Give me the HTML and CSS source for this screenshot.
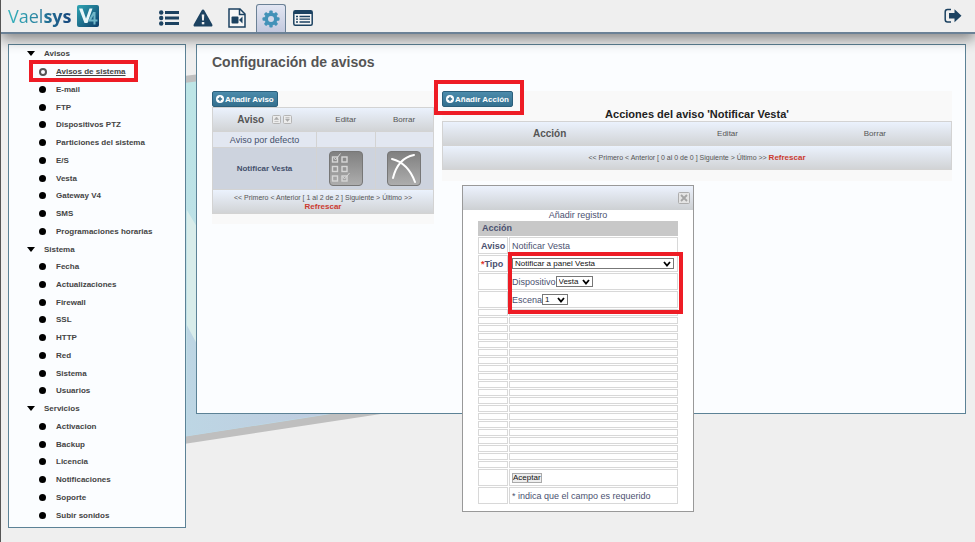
FILE: index.html
```html
<!DOCTYPE html>
<html lang="es">
<head>
<meta charset="utf-8">
<title>Vaelsys V4 - Configuración de avisos</title>
<link rel="stylesheet" href="styles.css">
</head>
<body>
<svg class="backdrop" viewBox="0 0 975 542" preserveAspectRatio="none" aria-hidden="true">
  <defs>
    <linearGradient id="sky" x1="0" y1="0" x2="0" y2="1">
      <stop offset="0" stop-color="#bde6e6"/><stop offset="1" stop-color="#bcdbe8"/>
    </linearGradient>
    <linearGradient id="sea" x1="0" y1="0" x2="1" y2="0">
      <stop offset="0" stop-color="#bdd6e4"/><stop offset="1" stop-color="#bfcbdf"/>
    </linearGradient>
  </defs>
  <path d="M150 80 400 50V411L150 449Z" fill="#bfbfbf"/>
  <path d="M150 87 400 57V403L150 442Z" fill="url(#sky)"/>
  <path d="M186 210 300 400H186Z" fill="#d8ecea"/>
  <path d="M186 325 230 408 340 412 186 436Z" fill="url(#sea)"/>
</svg>

<header class="topbar">
  <a class="brand" href="#" aria-label="Vaelsys V4">
    <span class="brand-name">Vael<b>sys</b></span>
    <svg class="brand-mark" viewBox="0 0 22 22" aria-hidden="true">
      <defs><linearGradient id="mark" x1="0" y1="0" x2="1" y2="1"><stop offset="0" stop-color="#2fa6b4"/><stop offset="1" stop-color="#0d3c68"/></linearGradient></defs>
      <rect width="22" height="22" rx="2" fill="url(#mark)"/>
      <path d="M2 3.500H5.500L9 13.500 12.500 3.500H15.500L10.500 18H7.500Z" fill="#e9f7f9"/>
      <path d="M17.500 7V19.500M17 7.500 12.500 15.500H20.500" fill="none" stroke="#6fb6c8" stroke-width="2"/>
    </svg>
  </a>
  <nav class="tabs" aria-label="Secciones">
    <a class="tab" href="#" aria-label="Lista"><svg width="20" height="16" viewBox="0 0 20 16"><g fill="#1c4261"><circle cx="2.200" cy="2.500" r="2.200"/><circle cx="2.200" cy="8" r="2.200"/><circle cx="2.200" cy="13.500" r="2.200"/><rect x="6" y="1" width="14" height="3"/><rect x="6" y="6.500" width="14" height="3"/><rect x="6" y="12" width="14" height="3"/></g></svg></a>
    <a class="tab" href="#" aria-label="Alarmas"><svg width="20" height="18" viewBox="0 0 20 18"><path d="M10 0.500Q10.900 0.500 11.400 1.400L19.300 15.400Q20 17.500 18 17.500H2Q0 17.500 0.700 15.400L8.600 1.400Q9.100 0.500 10 0.500Z" fill="#1c4261"/><path d="M8.700 5.500H11.300L10.900 11.500H9.100Z" fill="#efefef"/><rect x="8.800" y="13" width="2.500" height="2.300" fill="#efefef"/></svg></a>
    <a class="tab" href="#" aria-label="Grabaciones"><svg width="18" height="20" viewBox="0 0 18 20"><path d="M1 1H12L17 6V19H1Z" fill="#f8f8f8" stroke="#1c4261" stroke-width="1.500"/><path d="M11.500 1V6.500H17" fill="none" stroke="#1c4261" stroke-width="1.500"/><rect x="3.500" y="8.500" width="7" height="7" rx="1" fill="#1c4261"/><path d="M11 12 14.500 8.500V15.500Z" fill="#1c4261"/></svg></a>
    <a class="tab tab-active" href="#" aria-label="Configuración" aria-current="page"><svg width="18" height="18" viewBox="0 0 18 18"><g fill="#4292b8"><circle cx="9" cy="9" r="6.500"/><g id="teeth"><rect x="7.300" y="0.500" width="3.400" height="17" rx="1"/><rect x="0.500" y="7.300" width="17" height="3.400" rx="1"/></g><use href="#teeth" transform="rotate(45 9 9)"/></g><circle cx="9" cy="9" r="3" fill="#d3d9ea"/></svg></a>
    <a class="tab" href="#" aria-label="Registro"><svg width="20" height="16" viewBox="0 0 20 16"><rect x="0.800" y="0.800" width="18.400" height="14.400" rx="1.500" fill="#f6f6f6" stroke="#1c4261" stroke-width="1.500"/><path d="M1 1H19V4H1Z" fill="#1c4261"/><path d="M3 6.500H5M3 9.200H5M3 12H5M6.500 6.500H17M6.500 9.200H17M6.500 12H17" stroke="#1c4261" stroke-width="1.300"/></svg></a>
  </nav>
  <a class="logout" href="#" aria-label="Salir"><svg width="18" height="16" viewBox="0 0 18 16"><path d="M7 1.500H3.500Q1.200 1.500 1.200 4V11.500Q1.200 14 3.500 14H7" fill="none" stroke="#1c4261" stroke-width="1.500"/><path d="M5 5H10.500V1.200L17.500 7.700 10.500 14.200V10.500H5Z" fill="#1c4261"/></svg></a>
</header>

<div class="layout">
  <nav class="sidebar" aria-label="Menú">
    <ul class="tree">
      <li class="group"><span class="group-name">Avisos</span>
        <ul>
          <li><a class="current" href="#">Avisos de sistema</a></li>
          <li><a href="#">E-mail</a></li>
          <li><a href="#">FTP</a></li>
          <li><a href="#">Dispositivos PTZ</a></li>
          <li><a href="#">Particiones del sistema</a></li>
          <li><a href="#">E/S</a></li>
          <li><a href="#">Vesta</a></li>
          <li><a href="#">Gateway V4</a></li>
          <li><a href="#">SMS</a></li>
          <li><a href="#">Programaciones horarias</a></li>
        </ul>
      </li>
      <li class="group"><span class="group-name">Sistema</span>
        <ul>
          <li><a href="#">Fecha</a></li>
          <li><a href="#">Actualizaciones</a></li>
          <li><a href="#">Firewall</a></li>
          <li><a href="#">SSL</a></li>
          <li><a href="#">HTTP</a></li>
          <li><a href="#">Red</a></li>
          <li><a href="#">Sistema</a></li>
          <li><a href="#">Usuarios</a></li>
        </ul>
      </li>
      <li class="group"><span class="group-name">Servicios</span>
        <ul>
          <li><a href="#">Activacion</a></li>
          <li><a href="#">Backup</a></li>
          <li><a href="#">Licencia</a></li>
          <li><a href="#">Notificaciones</a></li>
          <li><a href="#">Soporte</a></li>
          <li><a href="#">Subir sonidos</a></li>
        </ul>
      </li>
    </ul>
  </nav>

  <main class="panel">
    <h1>Configuración de avisos</h1>
    <div class="columns">
      <section class="block block-notices">
        <button class="add" type="button"><svg width="8" height="8" viewBox="0 0 8 8" aria-hidden="true"><circle cx="4" cy="4" r="4" fill="#fff"/><path d="M4 1.800V6.200M1.800 4H6.200" stroke="#35708f" stroke-width="1.400"/></svg>Añadir Aviso</button>
        <table class="list notices">
          <colgroup><col class="c-name"><col class="c-act"><col class="c-act"></colgroup>
          <thead>
            <tr><th class="main-col"><span class="sortable">Aviso
              <svg width="20" height="9" viewBox="0 0 20 9" aria-hidden="true"><g fill="#ececec" stroke="#b5b5b5"><rect x="0.500" y="0.500" width="8" height="8" rx="1"/><rect x="11.500" y="0.500" width="8" height="8" rx="1"/></g><path d="M4.500 2 6.500 4.500H2.500ZM2.500 6.500H6.500M15.500 6.500 13.500 4H17.500ZM13.500 2.500H17.500" fill="#aaa" stroke="#aaa" stroke-width="0.600"/></svg></span></th><th>Editar</th><th>Borrar</th></tr>
          </thead>
          <tbody>
            <tr><td>Aviso por defecto</td><td></td><td></td></tr>
            <tr class="selected"><td>Notificar Vesta</td>
              <td><button class="tile" type="button" aria-label="Editar"><svg width="34" height="35" viewBox="0 0 34 35"><g fill="none" stroke="#d6d6d6" stroke-width="1.400"><rect x="3.500" y="6" width="5" height="5"/><rect x="13" y="6" width="5" height="5"/><rect x="3.500" y="15.500" width="5" height="5"/><rect x="13" y="15.500" width="5" height="5"/><rect x="3.500" y="25" width="5" height="5"/><rect x="13" y="25" width="5" height="5"/><path d="M5 7 6.500 9 11.500 2.500M14 26 15.500 28 20.500 22" stroke-width="1"/></g></svg></button></td>
              <td><button class="tile" type="button" aria-label="Borrar"><svg width="34" height="35" viewBox="0 0 34 35"><path d="M5 8Q21 12 28 31M27 4Q11 7 6 27" fill="none" stroke="#fff" stroke-width="2" stroke-linecap="round"/></svg></button></td></tr>
          </tbody>
          <tfoot><tr><td colspan="3">&lt;&lt; Primero &lt; Anterior [ 1 al 2 de 2 ] Siguiente &gt; Último &gt;&gt;<br><a href="#">Refrescar</a></td></tr></tfoot>
        </table>
      </section>

      <section class="block block-actions">
        <button class="add marked" type="button"><svg width="8" height="8" viewBox="0 0 8 8" aria-hidden="true"><circle cx="4" cy="4" r="4" fill="#fff"/><path d="M4 1.800V6.200M1.800 4H6.200" stroke="#35708f" stroke-width="1.400"/></svg>Añadir Acción</button>
        <h2>Acciones del aviso 'Notificar Vesta'</h2>
        <table class="list actions">
          <colgroup><col class="c-action"><col class="c-edit"><col class="c-drop"></colgroup>
          <thead><tr><th class="main-col">Acción</th><th>Editar</th><th>Borrar</th></tr></thead>
          <tfoot><tr><td colspan="3">&lt;&lt; Primero &lt; Anterior [ 0 al 0 de 0 ] Siguiente &gt; Último &gt;&gt; <a href="#">Refrescar</a></td></tr></tfoot>
        </table>
      </section>
    </div>
  </main>
</div>

<div class="dialog" role="dialog" aria-labelledby="dialog-title">
  <div class="dialog-bar"><button class="close" type="button" aria-label="Cerrar"><svg width="12" height="12" viewBox="0 0 12 12"><rect x="0.500" y="0.500" width="11" height="11" rx="1" fill="#e4e4e4" stroke="#adadad"/><path d="M3 3 9 9M9 3 3 9" stroke="#a5a5a5" stroke-width="1.800"/></svg></button></div>
  <form class="dialog-body">
    <div class="dialog-title" id="dialog-title">Añadir registro</div>
    <div class="fields">
      <div class="caption">Acción</div>
      <div class="field"><span class="name">Aviso</span><span class="value">Notificar Vesta</span></div>
      <div class="marked-rows">
        <div class="field"><label class="name" for="tipo"><i>*</i>Tipo</label><span class="value"><select id="tipo" class="wide"><option>Notificar a panel Vesta</option></select></span></div>
        <div class="field"><span class="name"></span><span class="value"><label for="dispositivo">Dispositivo</label><select id="dispositivo" class="device"><option>Vesta</option></select></span></div>
        <div class="field"><span class="name"></span><span class="value"><label for="escena">Escena</label><select id="escena" class="scene"><option>1</option></select></span></div>
      </div>
      <div class="field thin"><span class="name"></span><span class="value"></span></div>
      <div class="field thin"><span class="name"></span><span class="value"></span></div>
      <div class="field thin"><span class="name"></span><span class="value"></span></div>
      <div class="field thin"><span class="name"></span><span class="value"></span></div>
      <div class="field thin"><span class="name"></span><span class="value"></span></div>
      <div class="field thin"><span class="name"></span><span class="value"></span></div>
      <div class="field thin"><span class="name"></span><span class="value"></span></div>
      <div class="field thin"><span class="name"></span><span class="value"></span></div>
      <div class="field thin"><span class="name"></span><span class="value"></span></div>
      <div class="field thin"><span class="name"></span><span class="value"></span></div>
      <div class="field thin"><span class="name"></span><span class="value"></span></div>
      <div class="field thin"><span class="name"></span><span class="value"></span></div>
      <div class="field thin"><span class="name"></span><span class="value"></span></div>
      <div class="field thin"><span class="name"></span><span class="value"></span></div>
      <div class="field thin"><span class="name"></span><span class="value"></span></div>
      <div class="field thin"><span class="name"></span><span class="value"></span></div>
      <div class="field thin"><span class="name"></span><span class="value"></span></div>
      <div class="field thin"><span class="name"></span><span class="value"></span></div>
      <div class="field thin"><span class="name"></span><span class="value"></span></div>
      <div class="field thin"><span class="name"></span><span class="value"></span></div>
      <div class="field"><span class="name"></span><span class="value"><button class="accept" type="button">Aceptar</button></span></div>
      <div class="field"><span class="name"></span><span class="value">*&nbsp;indica que el campo es requerido</span></div>
    </div>
  </form>
</div>
</body>
</html>
```

FILE: styles.css
```css
*, *::before, *::after { box-sizing: border-box; }

body {
  margin: 0;
  min-height: 100vh;
  display: flex;
  flex-direction: column;
  position: relative;
  background: #efefef;
  border-left: 1px solid #555;
  font-family: "Liberation Sans", Arial, sans-serif;
  font-size: 8px;
  color: #555;
}

a { color: inherit; text-decoration: none; }
button, select { font-family: inherit; margin: 0; padding: 0; }
ul { list-style: none; margin: 0; padding: 0; }
svg { display: block; }

.backdrop {
  position: absolute;
  inset: 0;
  width: 100%;
  height: 100%;
  z-index: -1;
}

.topbar {
  position: relative;
  z-index: 1;
  display: flex;
  align-items: flex-end;
  height: 34px;
  padding: 0 13px 0 7px;
  background: #efefef;
  border-bottom: 2px solid #6b8196;
  box-shadow: 0 5px 14px rgba(0, 0, 0, 0.45);
}

.brand { display: flex; align-items: center; gap: 5px; width: 144px; height: 32px; }
.brand-name {
  font-family: "Open Sans", sans-serif;
  font-size: 18px;
  line-height: 22px;
  color: #2aa3b5;
  background: linear-gradient(90deg, #35b4bd, #17457c);
  background-clip: text;
  -webkit-text-fill-color: transparent;
}
.brand-mark { width: 22px; height: 22px; }

.tabs { display: flex; flex: 1; align-items: flex-end; }
.tab { display: flex; align-items: center; justify-content: center; width: 34px; height: 28px; }
.tab-active {
  width: 30px;
  margin: 0 0 0 2px;
  border: 1px solid #6b8196;
  border-bottom: 0;
  border-radius: 3px 3px 0 0;
  background: linear-gradient(#e2e6f3, #c3c9de);
}
.logout { height: 32px; display: flex; align-items: center; }

.layout {
  flex: 1;
  display: flex;
  align-items: flex-start;
  gap: 10px;
  padding: 10px 9px 14px 7px;
}

.sidebar {
  align-self: stretch;
  width: 178px;
  display: flex;
  padding-bottom: 3px;
  background: #fbfdff;
  border: 1px solid #5c8296;
  font-size: 8px;
  font-weight: bold;
  color: #444;
}
.tree { flex: 1; display: grid; grid-auto-rows: minmax(17px, 1fr); }
.group, .group ul { display: contents; }
.group-name, .tree a { display: flex; align-items: center; }
.group-name { padding-left: 18px; gap: 9px; }
.group-name::before {
  content: "";
  border: 4px solid transparent;
  border-top: 5px solid #000;
  border-bottom: 0;
}
.tree ul li { display: flex; padding-left: 30px; }
.tree a { gap: 10px; }
.tree a::before {
  content: "";
  width: 7px;
  height: 7px;
  border-radius: 50%;
  background: #000;
}
.tree .current { position: relative; text-decoration: underline; }
.tree .current::before { background: none; border: 2px solid #555; width: 8px; height: 8px; margin-right: -1px; }
.tree .current::after {
  content: "";
  position: absolute;
  inset: -3px -12px -2px -10px;
  border: 4px solid #ee1c25;
}

.panel {
  flex: 1;
  min-height: 370px;
  padding: 7px 13px 7px 15px;
  background: #fbfdff;
  border: 1px solid #5c8296;
}
h1 { margin: 0 0 19px; font-size: 14px; line-height: 20px; }
.columns { display: flex; align-items: flex-start; gap: 8px; }
.block { background: #f9f9f9; }
.block-notices { width: 222px; padding-bottom: 10px; }
.block-actions { flex: 1; padding-bottom: 11px; }

.add {
  position: relative;
  display: flex;
  align-items: center;
  gap: 1px;
  height: 16px;
  padding: 0 3px;
  border: 1px solid #2b5f7b;
  border-radius: 2px;
  background: linear-gradient(#4b8bab, #34708f);
  color: #fff;
  font-size: 8px;
  font-weight: bold;
}
.marked::after {
  content: "";
  position: absolute;
  inset: -12px -12px -9px -9px;
  border: 4px solid #ee1c25;
}

h2 { margin: 2px 0 1px; text-align: center; font-size: 11px; line-height: 11px; color: #222; }

.list { width: 100%; table-layout: fixed; border-collapse: collapse; text-align: center; border: 1px solid #d3d3d3; }
.list td, .list th { padding: 0; border: 1px solid #d3d3d3; }
.list th { height: 24px; border-left: 0; border-right: 0; font-weight: normal; }
.list thead tr, .list tfoot tr { background: linear-gradient(#ebf2fd, #d0d2d4); }
.list .main-col { font-size: 10px; font-weight: bold; }
.sortable { display: inline-flex; align-items: center; gap: 8px; }
.list tbody { font-size: 9px; color: #44506c; }
.list tbody td { height: 16px; background: #e2e7f1; }
.list .selected td { height: 42px; background: #cdd3de; font-size: 8px; font-weight: bold; }
.list tfoot td { height: 24px; font-size: 7px; line-height: 9px; }
.list tfoot a { color: #cb3a30; font-size: 8px; font-weight: bold; }
.c-name { width: 104px; }
.c-action { width: 42%; }
.c-edit { width: 28%; }
.tile {
  display: block;
  width: 34px;
  height: 35px;
  margin: auto;
  border: 1px solid #777;
  border-radius: 4px;
  background: linear-gradient(#808080, #adadad);
}
.tile svg { margin: -1px; }

.dialog {
  position: absolute;
  left: 461px;
  top: 185px;
  width: 232px;
  padding-bottom: 7px;
  background: #fff;
  border: 1px solid #999;
  color: #4b5170;
  font-size: 9px;
}
.dialog-bar {
  display: flex;
  align-items: center;
  justify-content: flex-end;
  height: 24px;
  padding-right: 3px;
  background: linear-gradient(#ecf2fd, #cdd0d3);
}
.close { border: 0; background: none; }
.dialog-body { padding: 0 15px; }
.dialog-title { text-align: center; line-height: 11px; }
.fields { display: grid; gap: 1px; }
.caption { height: 15px; padding-left: 4px; line-height: 15px; background: #c8c8c8; font-weight: bold; }
.field { display: grid; grid-template-columns: 30px 1fr; gap: 1px; height: 17px; }
.field.thin { height: 7px; }
.name, .value { display: flex; align-items: center; border: 1px solid #d8d8d8; padding-left: 2px; white-space: nowrap; }
.name { font-weight: bold; }
.name i { color: #e0352b; font-style: normal; }
.marked-rows { position: relative; display: grid; gap: 1px; }
.marked-rows::after {
  content: "";
  position: absolute;
  inset: -3px -5px -6px 30px;
  border: 4px solid #ee1c25;
  pointer-events: none;
}
select {
  height: 11px;
  border: 1px solid #777;
  border-radius: 0;
  appearance: none;
  color: #111;
  font-size: 8px;
  line-height: 9px;
  padding-left: 2px;
  background: #fff url("data:image/svg+xml,%3Csvg xmlns='http://www.w3.org/2000/svg' width='8' height='6'%3E%3Cpath d='M1 1 4 4.500 7 1' fill='none' stroke='%23000' stroke-width='1.800'/%3E%3C/svg%3E") no-repeat right 2px center;
}
.wide { width: 162px; }
.device { width: 37px; }
.scene { width: 26px; }
.accept { height: 10px; border: 1px solid #aaa; background: #eee; color: #111; font-size: 8px; line-height: 8px; }
```
